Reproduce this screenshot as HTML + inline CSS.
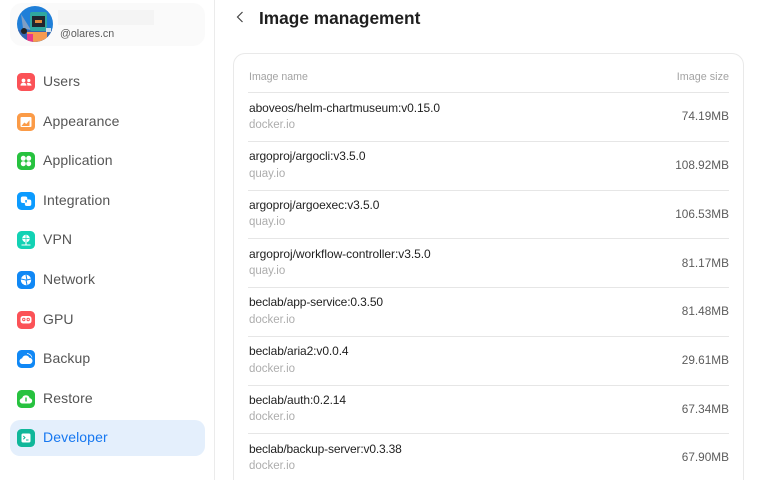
<!DOCTYPE html>
<html><head><meta charset="utf-8"><style>
html,body{margin:0;padding:0;width:759px;height:480px;overflow:hidden;background:#fff;font-family:"Liberation Sans",sans-serif;}
#w{position:relative;width:759px;height:480px;overflow:hidden;background:#fff;}
.a{position:absolute;white-space:nowrap;line-height:16px;}
.m{left:43px;font-size:14px;color:#555;letter-spacing:.1px;}
.ic{position:absolute;left:17px;width:18px;height:18px;}
.n{left:249px;font-size:12px;color:#1f1f1f;letter-spacing:-.1px;}
.d{left:249px;font-size:11.5px;color:#adadad;}
.s{right:30px;font-size:11.8px;color:#5c5c5c;}
.l{position:absolute;left:248px;width:481px;height:1px;background:#e6e6e6;}
</style></head><body><div id="w">
<div style="position:absolute;left:214px;top:0;width:1px;height:480px;background:#ebebeb"></div>
<div style="position:absolute;left:10px;top:3px;width:195px;height:43px;background:#fafafa;border-radius:12px"></div>
<svg style="position:absolute;left:17px;top:6px" width="36" height="36" viewBox="0 0 36 36">
<defs><clipPath id="c"><circle cx="18" cy="18" r="18"/></clipPath></defs>
<g clip-path="url(#c)"><rect width="36" height="36" fill="#1f7fd8"/><rect y="24" width="36" height="12" fill="#3566b0"/>
<path d="M4 8L14 24L6 22Z" fill="#7f9fc4"/><rect x="13" y="6" width="17" height="19" rx="2" fill="#2fa8a0"/><rect x="15" y="10" width="13" height="11" fill="#20262e"/><rect x="18" y="14" width="7" height="3" fill="#e08a3a"/>
<rect x="10" y="26" width="20" height="10" fill="#f59a50"/><rect x="10" y="28" width="6" height="8" fill="#e8388a"/><circle cx="7" cy="25" r="3" fill="#222"/><rect x="29" y="22" width="5" height="4" fill="#cfe0ea"/></g></svg>
<div style="position:absolute;left:58px;top:10px;width:96px;height:15px;background:#f4f4f4"></div>
<div class="a" style="left:60px;top:26px;font-size:10.7px;color:#5c5c5c">@olares.cn</div>

<svg class="ic" style="top:73px" viewBox="0 0 18 18"><rect width="18" height="18" rx="4.5" fill="#fb5257"/><circle cx="6.500" cy="7.500" r="1.900" fill="#fff"/><circle cx="11.800" cy="7.500" r="1.600" fill="#fff"/><path d="M3.500 12.600c0-2 1.400-2.800 3-2.800s3 .8 3 2.800zM10.300 12.600c.1-1 0-1.800-.5-2.500 2-.5 4.700.1 4.700 2.500z" fill="#fff"/></svg>
<div class="a m" style="top:73px">Users</div>
<svg class="ic" style="top:113px" viewBox="0 0 18 18"><rect width="18" height="18" rx="4.5" fill="#fb9b47"/><rect x="3.500" y="4" width="11" height="10" rx="1" fill="#fff"/><path d="M4.500 13l2.800-3.500 2 1.500 3.200-3.800v5.800z" fill="#fb9b47"/></svg>
<div class="a m" style="top:113px">Appearance</div>
<svg class="ic" style="top:152px" viewBox="0 0 18 18"><rect width="18" height="18" rx="4.5" fill="#27c23f"/><circle cx="6.300" cy="6.300" r="2.500" fill="#fff"/><circle cx="11.700" cy="6.300" r="2.500" fill="#fff"/><circle cx="6.300" cy="11.700" r="2.500" fill="#fff"/><circle cx="11.700" cy="11.700" r="2.500" fill="#fff"/></svg>
<div class="a m" style="top:152px">Application</div>
<svg class="ic" style="top:192px" viewBox="0 0 18 18"><rect width="18" height="18" rx="4.5" fill="#0c9bff"/><rect x="3.800" y="4.500" width="6.500" height="6.500" rx="2" fill="#fff"/><rect x="7.800" y="7.500" width="6.500" height="6.500" rx="2" fill="#fff"/><rect x="8.300" y="8" width="1.500" height="2.500" fill="#0c9bff"/></svg>
<div class="a m" style="top:192px">Integration</div>
<svg class="ic" style="top:231px" viewBox="0 0 18 18"><rect width="18" height="18" rx="4.5" fill="#12d2b4"/><circle cx="9" cy="7.500" r="3.800" fill="#fff"/><path d="M5.500 7.500h7M9 4v7" stroke="#12d2b4" stroke-width=".7"/><path d="M9 11v3M4.500 14h9" stroke="#fff" stroke-width="1.100"/></svg>
<div class="a m" style="top:231px">VPN</div>
<svg class="ic" style="top:271px" viewBox="0 0 18 18"><rect width="18" height="18" rx="4.5" fill="#1088f5"/><circle cx="9" cy="9" r="5.200" fill="#fff"/><path d="M4 8l5 1 1 5M9 4l1 5 4-1" stroke="#1088f5" stroke-width="1" fill="none"/></svg>
<div class="a m" style="top:271px">Network</div>
<svg class="ic" style="top:311px" viewBox="0 0 18 18"><rect width="18" height="18" rx="4.5" fill="#fb5257"/><rect x="3.500" y="5" width="11" height="7.500" rx="2.500" fill="#fff"/><circle cx="6.800" cy="8.500" r="1.200" fill="none" stroke="#fb5257"/><circle cx="11.200" cy="8.500" r="1.200" fill="none" stroke="#fb5257"/></svg>
<div class="a m" style="top:311px">GPU</div>
<svg class="ic" style="top:350px" viewBox="0 0 18 18"><rect width="18" height="18" rx="4.5" fill="#1088f5"/><path d="M5.500 14a2.800 2.800 0 0 1-.4-5.600 3.800 3.800 0 0 1 7.200-.6 3.100 3.100 0 0 1 .2 6.200z" fill="#fff"/><path d="M10 3.500a6 6 0 0 1 5 4" stroke="#fff" stroke-width=".7" fill="none"/></svg>
<div class="a m" style="top:350px">Backup</div>
<svg class="ic" style="top:390px" viewBox="0 0 18 18"><rect width="18" height="18" rx="4.5" fill="#27c23f"/><path d="M5.500 13.500a2.600 2.600 0 0 1-.4-5.200 3.900 3.900 0 0 1 7.600 0 2.600 2.600 0 0 1-.2 5.200z" fill="#fff"/><path d="M9 7.500v4" stroke="#27c23f" stroke-width="1.400"/></svg>
<div class="a m" style="top:390px">Restore</div>
<div style="position:absolute;left:10px;top:420px;width:195px;height:36px;background:#e4effc;border-radius:10px"></div>
<svg class="ic" style="top:429px" viewBox="0 0 18 18"><rect width="18" height="18" rx="4.5" fill="#10b79a"/><rect x="4.500" y="4.500" width="9" height="9" rx="1.500" fill="#fff"/><path d="M6.300 7l1.700 1.600-1.700 1.600" stroke="#10b79a" stroke-width="1" fill="none"/><path d="M9 11h2.500" stroke="#10b79a"/></svg>
<div class="a m" style="top:429px;color:#1677f0">Developer</div>

<svg style="position:absolute;left:235px;top:11px" width="10" height="12" viewBox="0 0 10 12"><path d="M7.500 1L2.500 6l5 5" stroke="#444" stroke-width="1.200" fill="none"/></svg>
<div class="a" style="left:259px;top:9px;font-size:17.3px;line-height:18px;font-weight:bold;color:#1f1f1f">Image management</div>

<div style="position:absolute;left:233px;top:53px;width:509px;height:426px;border:1px solid #e9e9e9;border-bottom:none;border-radius:12px 12px 0 0"></div>
<div class="a" style="left:249px;top:69px;font-size:10.6px;color:#a3a3a3">Image name</div>
<div class="a" style="right:30px;top:69px;font-size:10.8px;color:#a3a3a3">Image size</div>
<div class="l" style="top:92px"></div>

<div class="a n" style="top:100px">aboveos/helm-chartmuseum:v0.15.0</div><div class="a d" style="top:117px">docker.io</div><div class="a s" style="top:108px">74.19MB</div><div class="l" style="top:141px"></div>
<div class="a n" style="top:148px">argoproj/argocli:v3.5.0</div><div class="a d" style="top:166px">quay.io</div><div class="a s" style="top:157px">108.92MB</div><div class="l" style="top:190px"></div>
<div class="a n" style="top:197px">argoproj/argoexec:v3.5.0</div><div class="a d" style="top:214px">quay.io</div><div class="a s" style="top:206px">106.53MB</div><div class="l" style="top:238px"></div>
<div class="a n" style="top:246px;letter-spacing:-.05px">argoproj/workflow-controller:v3.5.0</div><div class="a d" style="top:263px">quay.io</div><div class="a s" style="top:255px">81.17MB</div><div class="l" style="top:287px"></div>
<div class="a n" style="top:294px;letter-spacing:-.14px">beclab/app-service:0.3.50</div><div class="a d" style="top:312px">docker.io</div><div class="a s" style="top:303px">81.48MB</div><div class="l" style="top:336px"></div>
<div class="a n" style="top:343px">beclab/aria2:v0.0.4</div><div class="a d" style="top:361px">docker.io</div><div class="a s" style="top:352px">29.61MB</div><div class="l" style="top:385px"></div>
<div class="a n" style="top:392px">beclab/auth:0.2.14</div><div class="a d" style="top:409px">docker.io</div><div class="a s" style="top:401px">67.34MB</div><div class="l" style="top:433px"></div>
<div class="a n" style="top:441px;letter-spacing:-.17px">beclab/backup-server:v0.3.38</div><div class="a d" style="top:458px">docker.io</div><div class="a s" style="top:449px">67.90MB</div>
</div></body></html>
